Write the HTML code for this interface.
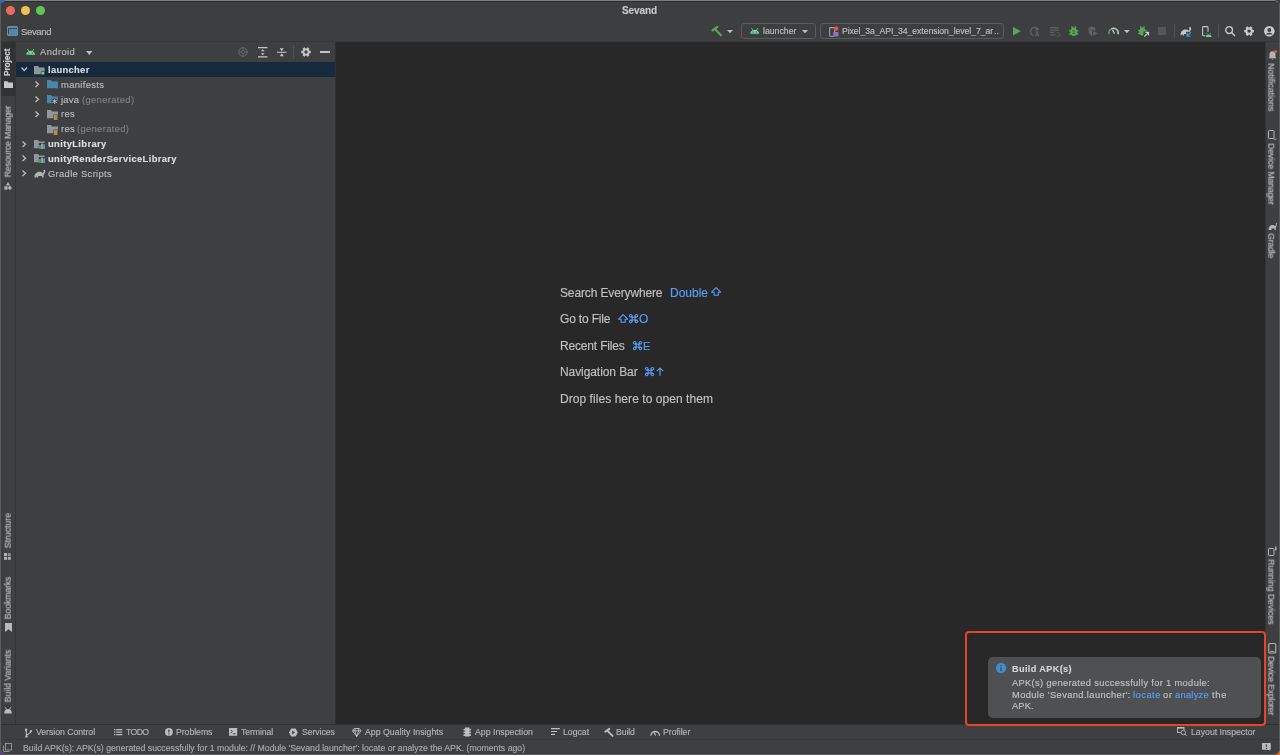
<!DOCTYPE html>
<html><head><meta charset="utf-8"><style>
html,body{margin:0;padding:0;width:1280px;height:755px;overflow:hidden;background:#3a3c3e;}
body{font-family:"Liberation Sans", sans-serif;position:relative;}
div{will-change:transform;-webkit-text-stroke:0.15px currentColor;}
</style></head><body>
<div style="position:absolute;left:0px;top:0px;width:8px;height:8px;background:#2f62d8;"></div><div style="position:absolute;left:0px;top:747px;width:8px;height:8px;background:#5a3a8a;"></div><div style="position:absolute;left:1272px;top:747px;width:8px;height:8px;background:#d8702a;"></div><div style="position:absolute;left:0px;top:0px;width:1280px;height:755px;background:#3e3f41;border-radius:6px 6px 6px 6px;box-sizing:border-box;border:1px solid #5a5c5e;border-top-color:#7d7e80;"></div><div style="position:absolute;left:1px;top:1px;width:1278px;height:40px;background:#3d3e40;border-radius:5px 5px 0 0;"></div><div style="position:absolute;left:5px;top:1px;width:1270px;height:0.7px;background:#2c2d2f;"></div><div style="position:absolute;left:1px;top:41px;width:1278px;height:1px;background:#363739;"></div><div style="position:absolute;left:5.9px;top:5.9px;width:9.2px;height:9.2px;background:#ee6a5e;border-radius:50%;"></div><div style="position:absolute;left:20.9px;top:5.9px;width:9.2px;height:9.2px;background:#f5bf4f;border-radius:50%;"></div><div style="position:absolute;left:35.9px;top:5.9px;width:9.2px;height:9.2px;background:#61c554;border-radius:50%;"></div><div style="position:absolute;left:7px;top:26px;width:11px;height:9.8px;background:#80858a;border-radius:1.5px;"></div><div style="position:absolute;left:8.2px;top:28.3px;width:8.6px;height:6.3px;background:#3a4450;"></div><div style="position:absolute;left:8.7px;top:28.7px;width:7.7px;height:5.6px;background:#4a88b5;"></div><div style="position:absolute;left:1px;top:42px;width:1278px;height:682px;background:#3e3f41;"></div><div style="position:absolute;left:15px;top:42px;width:1px;height:682px;background:#333537;"></div><div style="position:absolute;left:1px;top:42px;width:14px;height:54px;background:#2f3133;"></div><div style="position:absolute;left:16px;top:42px;width:319px;height:682px;background:#3e3f41;"></div><div style="position:absolute;left:335px;top:42px;width:1px;height:682px;background:#2f3032;"></div><div style="position:absolute;left:336px;top:42px;width:929px;height:682px;background:#282828;"></div><div style="position:absolute;left:1265px;top:42px;width:1px;height:682px;background:#333537;"></div><div style="position:absolute;left:1px;top:724px;width:1278px;height:1px;background:#2e3031;"></div><div style="position:absolute;left:1px;top:739px;width:1278px;height:1px;background:#37393b;"></div><svg style="position:absolute;left:3.5px;top:80.9px;overflow:visible" width="9" height="7" viewBox="0 0 9 7"><path d="M0 0.3h3.5l1 1.2H9V7H0z" fill="#c8c8c8"/></svg><svg style="position:absolute;left:4px;top:181.8px;overflow:visible" width="8" height="8" viewBox="0 0 8 8"><path d="M4 0L6.2 3.4H1.8z" fill="#b0b0b0"/><rect x="0.3" y="4.3" width="3.3" height="3.3" fill="#b0b0b0"/><circle cx="5.9" cy="5.9" r="1.8" fill="#b0b0b0"/></svg><svg style="position:absolute;left:4.4px;top:552.7px;overflow:visible" width="7" height="7" viewBox="0 0 7 7"><rect x="0" y="0" width="3" height="3" fill="#b0b0b0"/><rect x="3.8" y="3.8" width="3" height="3" fill="#b0b0b0"/><rect x="3.8" y="0" width="3" height="3" fill="#8a8a8a"/><rect x="0" y="3.8" width="3" height="3" fill="#b0b0b0"/></svg><svg style="position:absolute;left:4.5px;top:622.8px;overflow:visible" width="7" height="9" viewBox="0 0 7 9"><path d="M0 0h7v9L3.5 6.3 0 9z" fill="#b8b8b8"/></svg><svg style="position:absolute;left:3.8px;top:706.6px;overflow:visible" width="8" height="6.5" viewBox="0 0 8 6.5"><path d="M0.2 6.5C0.2 3.4 1.8 2 4 2s3.8 1.4 3.8 4.5z" fill="#bcbcbc"/><path d="M1.3 0.4l1.1 1.9M6.7 0.4L5.6 2.3" stroke="#bcbcbc" stroke-width="1"/></svg><svg style="position:absolute;left:1268px;top:49.5px;overflow:visible" width="9" height="10" viewBox="0 0 9 10"><path d="M4.5 1.2c-2 0-3 1.5-3 3.3v2.6L0.5 8.3h8L7.5 7.1V4.5c0-1.8-1-3.3-3-3.3zM3.5 8.8h2l-1 1z" fill="#b4b4b4"/><circle cx="7.5" cy="1.6" r="1.6" fill="#e0553e"/></svg><svg style="position:absolute;left:1267.5px;top:130px;overflow:visible" width="9" height="10" viewBox="0 0 9 10"><rect x="0.5" y="0.5" width="5.5" height="8" rx="0.8" fill="none" stroke="#b4b4b4" stroke-width="1"/><path d="M5 9.5a2.5 2.5 0 0 1 4 0z" fill="#b4b4b4"/></svg><svg style="position:absolute;left:1267.5px;top:221.4px;overflow:visible" width="9" height="9" viewBox="0 0 9 9"><path d="M0.5 9c0-3 1.5-5 4-5 1.2 0 2 .5 2.5 1.2L8.5 3.5 7.6 2.8 8.8 1.5 9 4 7.8 6.5V9H6.5V7.5h-3V9z" fill="#b4b4b4"/></svg><svg style="position:absolute;left:1267.5px;top:546.3px;overflow:visible" width="9" height="10" viewBox="0 0 9 10"><rect x="0.5" y="2.5" width="5.5" height="7" rx="0.6" fill="none" stroke="#b4b4b4" stroke-width="1"/><rect x="7" y="0.5" width="1.5" height="4" fill="#b4b4b4"/></svg><svg style="position:absolute;left:1267.5px;top:643.3px;overflow:visible" width="9" height="10" viewBox="0 0 9 10"><rect x="0.8" y="0.5" width="7" height="9.5" rx="1" fill="none" stroke="#b4b4b4" stroke-width="1.1"/><rect x="2.3" y="7.8" width="4" height="1" fill="#b4b4b4"/></svg><svg style="position:absolute;left:25.9px;top:48.9px" width="9.3" height="5.77" viewBox="0 0 10 6.2"><path d="M0.2 6.2a4.8 4.3 0 0 1 9.6 0z" fill="#6cd88a"/><path d="M1.6 0.2l1.3 1.8M8.4 0.2L7.1 2" stroke="#6cd88a" stroke-width="0.9" stroke-linecap="round"/><circle cx="3.1" cy="4.3" r="0.55" fill="#3c3e41"/><circle cx="6.9" cy="4.3" r="0.55" fill="#3c3e41"/></svg><svg style="position:absolute;left:85.7px;top:51px;overflow:visible" width="6.5" height="4" viewBox="0 0 6.5 4"><path d="M0 0h6.5L3.25 4z" fill="#bdbdbd"/></svg><svg style="position:absolute;left:238px;top:46.7px;overflow:visible" width="10" height="10" viewBox="0 0 10 10"><circle cx="5" cy="5" r="4.3" fill="none" stroke="#6a6c6e" stroke-width="0.9"/><circle cx="5" cy="5" r="1.6" fill="none" stroke="#6a6c6e" stroke-width="0.8"/><path d="M5 0.7v2.2M5 7.1v2.2M0.7 5h2.2M7.1 5h2.2" stroke="#6a6c6e" stroke-width="0.9"/></svg><svg style="position:absolute;left:257.5px;top:46.5px;overflow:visible" width="9.5" height="10.5" viewBox="0 0 9.5 10.5"><path d="M0 0.6h9.5M0 9.9h9.5" stroke="#c4c4c4" stroke-width="1.1"/><path d="M4.75 2.3L6.6 4.3H2.9zM4.75 8.2L6.6 6.2H2.9z" fill="#c4c4c4"/></svg><svg style="position:absolute;left:277px;top:46.5px;overflow:visible" width="9.5" height="10.5" viewBox="0 0 9.5 10.5"><path d="M0 5.25h9.5" stroke="#c4c4c4" stroke-width="1.1"/><path d="M4.75 4.2L6.8 1.2H2.7zM4.75 6.3L6.8 9.3H2.7z" fill="#c4c4c4"/></svg><div style="position:absolute;left:293.3px;top:45px;width:0.9px;height:14px;background:#505254;"></div><svg style="position:absolute;left:300.8px;top:46.8px;overflow:visible" width="10" height="10" viewBox="0 0 10.2 10.2"><path d="M8.53 3.72 L9.95 3.88 L9.95 6.32 L8.53 6.48 L8.01 7.38 L8.58 8.69 L6.46 9.91 L5.62 8.76 L4.58 8.76 L3.74 9.91 L1.62 8.69 L2.19 7.38 L1.67 6.48 L0.25 6.32 L0.25 3.88 L1.67 3.72 L2.19 2.82 L1.62 1.51 L3.74 0.29 L4.58 1.44 L5.62 1.44 L6.46 0.29 L8.58 1.51 L8.01 2.82Z" fill="#c4c4c4"/><circle cx="5.1" cy="5.1" r="1.7" fill="#3c3e41"/></svg><div style="position:absolute;left:320px;top:51.2px;width:10px;height:1.5px;background:#c4c4c4;"></div><div style="position:absolute;left:16px;top:62px;width:319px;height:15px;background:#16293d;"></div><svg style="position:absolute;left:20.9px;top:67.25px;overflow:visible" width="6.5" height="4" viewBox="0 0 6.5 4"><path d="M0.5 0.5L3.25 3.5 6 0.5" fill="none" stroke="#bcbcbc" stroke-width="1.3"/></svg><svg style="position:absolute;left:33.9px;top:65.8px;overflow:visible" width="11" height="9" viewBox="0 0 11 9"><path d="M0 0h4l1.2 1.4H10.6V8.2H0z" fill="#8f969c"/><circle cx="8.8" cy="7.1" r="2.2" fill="#16293d"/><circle cx="8.8" cy="7.1" r="1.7" fill="#5fd77b"/></svg><svg style="position:absolute;left:35px;top:81.35px;overflow:visible" width="4" height="6.5" viewBox="0 0 4 6.5"><path d="M0.5 0.5L3.5 3.25 0.5 6" fill="none" stroke="#bcbcbc" stroke-width="1.3"/></svg><svg style="position:absolute;left:47px;top:80.45px;overflow:visible" width="11" height="8.2" viewBox="0 0 11 8.2"><path d="M0 0h4l1.2 1.4H11V8.2H0z" fill="#4a86ac"/></svg><svg style="position:absolute;left:35px;top:96.14999999999999px;overflow:visible" width="4" height="6.5" viewBox="0 0 4 6.5"><path d="M0.5 0.5L3.5 3.25 0.5 6" fill="none" stroke="#bcbcbc" stroke-width="1.3"/></svg><svg style="position:absolute;left:47px;top:95.25px;overflow:visible" width="11" height="9" viewBox="0 0 11 9"><path d="M0 0h4l1.2 1.4H11V8.2H0z" fill="#4a86ac"/><circle cx="7.6" cy="6.4" r="3.1" fill="#3c3e41"/><path d="M7.6 3.8v5.2M5.35 5.1l4.5 2.6M5.35 7.7l4.5-2.6" stroke="#c0c0c0" stroke-width="0.9"/></svg><svg style="position:absolute;left:35px;top:110.95px;overflow:visible" width="4" height="6.5" viewBox="0 0 4 6.5"><path d="M0.5 0.5L3.5 3.25 0.5 6" fill="none" stroke="#bcbcbc" stroke-width="1.3"/></svg><svg style="position:absolute;left:47px;top:110.05000000000001px;overflow:visible" width="11" height="10" viewBox="0 0 11 10"><path d="M0 0h4l1.2 1.4H11V8.2H0z" fill="#8f969c"/><rect x="6.3" y="4.6" width="4.5" height="5.4" fill="#3c3e41"/><rect x="6.8" y="5" width="3.6" height="5" fill="#b68a4a"/></svg><svg style="position:absolute;left:47px;top:124.85px;overflow:visible" width="11" height="10" viewBox="0 0 11 10"><path d="M0 0h4l1.2 1.4H11V8.2H0z" fill="#8f969c"/><rect x="6.3" y="4.6" width="4.5" height="5.4" fill="#3c3e41"/><rect x="6.8" y="5" width="3.6" height="5" fill="#b68a4a"/></svg><svg style="position:absolute;left:21.5px;top:140.55px;overflow:visible" width="4" height="6.5" viewBox="0 0 4 6.5"><path d="M0.5 0.5L3.5 3.25 0.5 6" fill="none" stroke="#bcbcbc" stroke-width="1.3"/></svg><svg style="position:absolute;left:33.9px;top:139.65px;overflow:visible" width="11" height="9" viewBox="0 0 11 9"><path d="M0 0h4l1.2 1.4H10.6V8.2H0z" fill="#8f969c"/><rect x="4.8" y="3" width="6" height="6" fill="#3c3e41"/><rect x="5.2" y="5" width="1.5" height="4" fill="#5ab552"/><rect x="7.3" y="3.6" width="1.5" height="5.4" fill="#b8b8b8"/><rect x="9.3" y="4.3" width="1.5" height="4.7" fill="#40b6e0"/></svg><svg style="position:absolute;left:21.5px;top:155.35000000000002px;overflow:visible" width="4" height="6.5" viewBox="0 0 4 6.5"><path d="M0.5 0.5L3.5 3.25 0.5 6" fill="none" stroke="#bcbcbc" stroke-width="1.3"/></svg><svg style="position:absolute;left:33.9px;top:154.45000000000002px;overflow:visible" width="11" height="9" viewBox="0 0 11 9"><path d="M0 0h4l1.2 1.4H10.6V8.2H0z" fill="#8f969c"/><rect x="4.8" y="3" width="6" height="6" fill="#3c3e41"/><rect x="5.2" y="5" width="1.5" height="4" fill="#5ab552"/><rect x="7.3" y="3.6" width="1.5" height="5.4" fill="#b8b8b8"/><rect x="9.3" y="4.3" width="1.5" height="4.7" fill="#40b6e0"/></svg><svg style="position:absolute;left:21.5px;top:170.15000000000003px;overflow:visible" width="4" height="6.5" viewBox="0 0 4 6.5"><path d="M0.5 0.5L3.5 3.25 0.5 6" fill="none" stroke="#bcbcbc" stroke-width="1.3"/></svg><svg style="position:absolute;left:33.5px;top:168.65000000000003px;overflow:visible" width="11.5" height="8.6" viewBox="0 0 11.5 8.6"><path d="M0.3 8.6C0.3 5 2.5 2.8 5.5 2.8c1.6 0 2.6.6 3.2 1.4l1.3-1.6-.9-.7 1-1.4c.8.3 1.4 1.2 1.3 2.3L9.6 6v2.6H8V7H4.2v1.6H2.6V7.2L1.8 8.6z" fill="#b4b4b4"/></svg><svg style="position:absolute;left:711.4px;top:287.3px;overflow:visible" width="10.3" height="8.8" viewBox="0 0 10.3 8.8"><path d="M5.15 0.6L9.7 5.2H7.2V8.3H3.1V5.2H0.6z" fill="none" stroke="#589df6" stroke-width="1.1" stroke-linejoin="round"/></svg><svg style="position:absolute;left:617.8px;top:314.3px;overflow:visible" width="10.3" height="8.8" viewBox="0 0 10.3 8.8"><path d="M5.15 0.6L9.7 5.2H7.2V8.3H3.1V5.2H0.6z" fill="none" stroke="#589df6" stroke-width="1.1" stroke-linejoin="round"/></svg><svg style="position:absolute;left:629.3px;top:314.1px;overflow:visible" width="9.2" height="9.2" viewBox="0 0 9.2 9.2"><g fill="none" stroke="#589df6" stroke-width="1.05"><path d="M3.2 1.7V7.5M6 1.7V7.5M1.7 3.2H7.5M1.7 6H7.5"/><circle cx="1.75" cy="1.75" r="1.3"/><circle cx="7.45" cy="1.75" r="1.3"/><circle cx="1.75" cy="7.45" r="1.3"/><circle cx="7.45" cy="7.45" r="1.3"/></g></svg><svg style="position:absolute;left:632.6px;top:340.6px;overflow:visible" width="9.2" height="9.2" viewBox="0 0 9.2 9.2"><g fill="none" stroke="#589df6" stroke-width="1.05"><path d="M3.2 1.7V7.5M6 1.7V7.5M1.7 3.2H7.5M1.7 6H7.5"/><circle cx="1.75" cy="1.75" r="1.3"/><circle cx="7.45" cy="1.75" r="1.3"/><circle cx="1.75" cy="7.45" r="1.3"/><circle cx="7.45" cy="7.45" r="1.3"/></g></svg><svg style="position:absolute;left:645.1px;top:367.1px;overflow:visible" width="9.2" height="9.2" viewBox="0 0 9.2 9.2"><g fill="none" stroke="#589df6" stroke-width="1.05"><path d="M3.2 1.7V7.5M6 1.7V7.5M1.7 3.2H7.5M1.7 6H7.5"/><circle cx="1.75" cy="1.75" r="1.3"/><circle cx="7.45" cy="1.75" r="1.3"/><circle cx="1.75" cy="7.45" r="1.3"/><circle cx="7.45" cy="7.45" r="1.3"/></g></svg><svg style="position:absolute;left:655.8px;top:367.2px;overflow:visible" width="8" height="9" viewBox="0 0 8 9"><path d="M4 8.8V1M0.8 4.2L4 1 7.2 4.2" fill="none" stroke="#589df6" stroke-width="1.15"/></svg><svg style="position:absolute;left:711px;top:25.6px;overflow:visible" width="11.5" height="10.5" viewBox="0 0 11.5 10.5"><path d="M1.6 4.4L6.2 0.9" stroke="#5aa55a" stroke-width="2.3" stroke-linecap="round"/><path d="M3.9 3.0L10.0 9.3" stroke="#5aa55a" stroke-width="2.2" stroke-linecap="round"/></svg><svg style="position:absolute;left:727px;top:29.8px;overflow:visible" width="6" height="3.3" viewBox="0 0 6 3.3"><path d="M0 0h6L3 3.3z" fill="#bdbdbd"/></svg><div style="position:absolute;left:741.2px;top:22.8px;width:74.5px;height:16.4px;background:transparent;box-sizing:border-box;border:1px solid #595b5d;border-radius:3px;"></div><svg style="position:absolute;left:749.5px;top:28px" width="9.4" height="5.83" viewBox="0 0 10 6.2"><path d="M0.2 6.2a4.8 4.3 0 0 1 9.6 0z" fill="#6cd88a"/><path d="M1.6 0.2l1.3 1.8M8.4 0.2L7.1 2" stroke="#6cd88a" stroke-width="0.9" stroke-linecap="round"/><circle cx="3.1" cy="4.3" r="0.55" fill="#3c3e41"/><circle cx="6.9" cy="4.3" r="0.55" fill="#3c3e41"/></svg><svg style="position:absolute;left:802px;top:30px;overflow:visible" width="6" height="3.3" viewBox="0 0 6 3.3"><path d="M0 0h6L3 3.3z" fill="#bdbdbd"/></svg><div style="position:absolute;left:820.3px;top:23px;width:183.7px;height:15.6px;background:transparent;box-sizing:border-box;border:1px solid #595b5d;border-radius:3px;"></div><svg style="position:absolute;left:829.3px;top:25.6px;overflow:visible" width="10" height="11" viewBox="0 0 10 11"><rect x="0.6" y="1.6" width="5" height="8.6" rx="0.8" fill="none" stroke="#9aa4ae" stroke-width="1.1"/><rect x="4.2" y="6" width="5.3" height="4.6" rx="0.6" fill="#8a73c0"/><circle cx="7.2" cy="2.6" r="2.3" fill="#e0553e"/></svg><svg style="position:absolute;left:1012.9px;top:26.9px;overflow:visible" width="7.8" height="8.4" viewBox="0 0 7.8 8.4"><path d="M0 0L7.8 4.2 0 8.4z" fill="#5aa55a"/></svg><svg style="position:absolute;left:1030.3px;top:26px;overflow:visible" width="10" height="10.5" viewBox="0 0 10 10.5"><path d="M8.2 3.6A4.1 4.1 0 1 0 3.6 9.6" fill="none" stroke="#5e6062" stroke-width="1.4"/><path d="M5.6 0.6L9.4 3.2 5.6 5.6z" fill="#5e6062"/><path d="M5.3 10.4L7.1 5.8 8.9 10.4M5.9 8.9h2.4" fill="none" stroke="#5e6062" stroke-width="1.1"/></svg><svg style="position:absolute;left:1050.2px;top:26.7px;overflow:visible" width="11" height="9.6" viewBox="0 0 11 9.6"><path d="M0 0.7h8.8M0 3.2h8.8M0 5.4h4M0 7.8h5.6" stroke="#5e6062" stroke-width="1.3"/><path d="M7.2 5.9c1.8-.4 2.9.5 2.9 1.6 0 1.2-1.2 1.8-2.6 1.6" fill="none" stroke="#5e6062" stroke-width="1.0"/></svg><svg style="position:absolute;left:1069.3px;top:25.8px;overflow:visible" width="9.5" height="10.6" viewBox="0 0 9.5 10.6"><g fill="#5aa55a"><path d="M2.3 0.2h1.4v1.4h2.1V0.2h1.4v1.9l-.6.8H2.9l-.6-.8z"/><ellipse cx="4.75" cy="6.1" rx="3.5" ry="4.0"/><rect x="0" y="4.3" width="9.5" height="1.3"/><rect x="0" y="7.3" width="9.5" height="1.3"/></g><path d="M3.6 5h2.3M3.6 7.3h2.3" stroke="#3d3e40" stroke-width="0.9"/></svg><svg style="position:absolute;left:1088px;top:26.2px;overflow:visible" width="11" height="10.5" viewBox="0 0 11 10.8"><path d="M0.3 1.8L3.8 0.2 7.3 1.8V5.3c0 2.4-1.6 3.8-3.5 4.6C1.9 9.1.3 7.7.3 5.3z" fill="#5e6062"/><path d="M4.6 4.4L10.8 7.6 4.6 10.8z" fill="#5e6062" stroke="#3d3e40" stroke-width="0.9"/></svg><svg style="position:absolute;left:1107.8px;top:26.9px;overflow:visible" width="11.1" height="7.5" viewBox="0 0 11.1 7.5"><path d="M1.1 7.2A4.45 4.45 0 0 1 3.2 2.2" fill="none" stroke="#5aa55a" stroke-width="1.5"/><path d="M3.2 2.2A4.45 4.45 0 0 1 10 7.2" fill="none" stroke="#c4c4c4" stroke-width="1.5"/><path d="M4.5 2.8L6.6 6.8" stroke="#c4c4c4" stroke-width="1.4"/></svg><svg style="position:absolute;left:1123.7px;top:29.8px;overflow:visible" width="5.8" height="3.3" viewBox="0 0 5.8 3.3"><path d="M0 0h5.8L2.9 3.3z" fill="#bdbdbd"/></svg><svg style="position:absolute;left:1138.2px;top:25.9px;overflow:visible" width="11.1" height="11.1" viewBox="0 0 11.1 11.1"><g fill="#5aa55a"><path d="M2.1 0.2h1.3v1.3h2V0.2h1.3v1.8l-.6.8H2.7l-.6-.8z"/><ellipse cx="4.4" cy="5.8" rx="3.3" ry="3.8"/><rect x="0" y="4.1" width="8.8" height="1.2"/><rect x="0" y="6.9" width="8.8" height="1.2"/></g><rect x="5.4" y="5.4" width="5.7" height="5.7" fill="#3d3e40"/><path d="M6.4 10.5L10.2 6.7M7.3 6.4h3.2v3.2" fill="none" stroke="#c8c8c8" stroke-width="1.2"/></svg><div style="position:absolute;left:1158.1px;top:27.3px;width:8px;height:7.7px;background:#545658;"></div><div style="position:absolute;left:1174.3px;top:24px;width:0.9px;height:14px;background:#505254;"></div><svg style="position:absolute;left:1180.4px;top:26.3px;overflow:visible" width="12.4" height="10.5" viewBox="0 0 12.4 10.5"><path d="M0.5 9.5C0.5 6 2.4 3.6 5.4 3.6c1.5 0 2.4.5 3 1.2l1.4-1.8-.9-.7 1-1.6c.9.3 1.6 1.4 1.3 2.6L9.4 6.6V9.5H7.9V8H4.1V9.5H2.6V8z" fill="#c4c4c4"/><rect x="6" y="5.8" width="6.4" height="4.7" fill="#3c3e41"/><path d="M6.8 10L11 6.2M7 6.8v3.4h3.4" fill="none" stroke="#3d95e0" stroke-width="1.2"/></svg><svg style="position:absolute;left:1201.7px;top:25.8px;overflow:visible" width="9.6" height="11" viewBox="0 0 9.6 11"><rect x="0.6" y="0.6" width="5.4" height="9.2" rx="0.9" fill="none" stroke="#c4c4c4" stroke-width="1.1"/><rect x="3.4" y="5.8" width="6.2" height="5.2" fill="#3d3e40"/><path d="M3.8 11a2.9 2.6 0 0 1 5.8 0z" fill="#6cd88a"/><path d="M4.6 6.9l.8 1.2M8.8 6.9L8 8.1" stroke="#6cd88a" stroke-width="0.7"/></svg><div style="position:absolute;left:1218px;top:24px;width:0.9px;height:14px;background:#505254;"></div><svg style="position:absolute;left:1225px;top:26px;overflow:visible" width="10.5" height="10.5" viewBox="0 0 10.5 10.5"><circle cx="4.1" cy="4.1" r="3.4" fill="none" stroke="#c8c8c8" stroke-width="1.3"/><path d="M6.6 6.6L10 10" stroke="#c8c8c8" stroke-width="1.4"/></svg><svg style="position:absolute;left:1244.3px;top:26.2px;overflow:visible" width="10.2" height="10.2" viewBox="0 0 10.2 10.2"><path d="M8.53 3.72 L9.95 3.88 L9.95 6.32 L8.53 6.48 L8.01 7.38 L8.58 8.69 L6.46 9.91 L5.62 8.76 L4.58 8.76 L3.74 9.91 L1.62 8.69 L2.19 7.38 L1.67 6.48 L0.25 6.32 L0.25 3.88 L1.67 3.72 L2.19 2.82 L1.62 1.51 L3.74 0.29 L4.58 1.44 L5.62 1.44 L6.46 0.29 L8.58 1.51 L8.01 2.82Z" fill="#c8c8c8"/><circle cx="5.1" cy="5.1" r="1.7" fill="#3d3e40"/></svg><svg style="position:absolute;left:1263.6px;top:26px;overflow:visible" width="10.6" height="10.6" viewBox="0 0 10.6 10.6"><circle cx="5.3" cy="5.3" r="5.3" fill="#c8c8c8"/><circle cx="5.3" cy="4" r="1.9" fill="#3c3e41"/><path d="M1.9 8.6a3.6 2.8 0 0 1 6.8 0" fill="#3c3e41"/></svg><svg style="position:absolute;left:24.7px;top:727.5px;overflow:visible" width="7.5" height="10" viewBox="0 0 7.5 10"><path d="M1.1 1.8L1.5 8.4M6 3.1C6 5.6 3.2 5.8 1.3 7" fill="none" stroke="#bdbdbd" stroke-width="1.1"/><circle cx="1.1" cy="1.8" r="1.2" fill="#bdbdbd"/><circle cx="6" cy="3.1" r="1.2" fill="#bdbdbd"/><circle cx="1.5" cy="8.4" r="1.2" fill="#bdbdbd"/></svg><svg style="position:absolute;left:113.8px;top:728.6px;overflow:visible" width="8.3" height="6.6" viewBox="0 0 8.3 6.6"><path d="M0 0.7h1.3M0 3.2h1.3M0 5.7h1.3M2.2 0.7h6.1M2.2 3.2h6.1M2.2 5.7h6.1" stroke="#bdbdbd" stroke-width="1.35"/></svg><svg style="position:absolute;left:164.6px;top:728.2px;overflow:visible" width="7.8" height="7.8" viewBox="0 0 7.8 7.8"><circle cx="3.9" cy="3.9" r="3.9" fill="#bdbdbd"/><path d="M3.9 1.5v2.9" stroke="#3c3e41" stroke-width="1.2"/><circle cx="3.9" cy="5.9" r="0.65" fill="#3c3e41"/></svg><svg style="position:absolute;left:228.9px;top:728.2px;overflow:visible" width="8.2" height="7.8" viewBox="0 0 8.2 7.8"><rect x="0" y="0" width="8.2" height="7.8" rx="0.6" fill="#bdbdbd"/><path d="M1.6 2l1.8 1.5-1.8 1.5M4 5.8h2.6" fill="none" stroke="#3c3e41" stroke-width="0.9"/></svg><svg style="position:absolute;left:288.9px;top:727.8px;overflow:visible" width="8.8" height="8.8" viewBox="0 0 8.8 8.8"><path d="M2.2 0.4h4.4l2.2 4-2.2 4H2.2L0 4.4z" fill="#bdbdbd"/><path d="M3.2 2.4L6 4.4 3.2 6.4z" fill="#3c3e41"/></svg><svg style="position:absolute;left:352.3px;top:727.6px;overflow:visible" width="9.4" height="9" viewBox="0 0 9.4 9"><path d="M2 0.5h5.4l1.6 2.3L4.7 8.5 0.4 2.8z M0.4 2.8h8.6M3.3 0.5l-.5 2.3 1.9 5.7 1.9-5.7-.5-2.3" fill="none" stroke="#bdbdbd" stroke-width="0.9"/></svg><svg style="position:absolute;left:462.7px;top:727.4px;overflow:visible" width="8.4" height="9.6" viewBox="0 0 8.4 9.6"><path d="M2 0.5h4.4v1.3h1.5v1.7H6.4v1h1.5v1.7H6.4v1h1.5V9H6.4v.6H2V9H.5V7.2H2v-1H.5V4.5H2v-1H.5V1.8H2z" fill="#bdbdbd"/></svg><svg style="position:absolute;left:550.6px;top:728.4px;overflow:visible" width="8.8" height="7" viewBox="0 0 8.8 7"><path d="M0 0.6h8.8M0 3.5h6M0 6.4h4" stroke="#bdbdbd" stroke-width="1.2"/></svg><svg style="position:absolute;left:603.8px;top:728.2px;overflow:visible" width="9.7" height="9.6" viewBox="0 0 9.7 9.6"><path d="M1.3 3.7L5.2 0.9" stroke="#bdbdbd" stroke-width="2" stroke-linecap="round"/><path d="M3.3 2.6L8.6 7.9" stroke="#bdbdbd" stroke-width="1.9" stroke-linecap="round"/></svg><svg style="position:absolute;left:649.6px;top:729px;overflow:visible" width="10.4" height="7" viewBox="0 0 10.4 7"><path d="M0.9 6.8A4.3 4.3 0 0 1 9.5 6.8" fill="none" stroke="#bdbdbd" stroke-width="1.3"/><path d="M4 3.2L5.6 6.4" stroke="#bdbdbd" stroke-width="1.2"/></svg><svg style="position:absolute;left:1177.3px;top:727.2px;overflow:visible" width="10" height="9" viewBox="0 0 10 9"><rect x="0.5" y="0.5" width="6.5" height="5" fill="none" stroke="#bdbdbd" stroke-width="0.9"/><rect x="0" y="0" width="7" height="1.6" fill="#bdbdbd"/><circle cx="6.3" cy="5.5" r="2.2" fill="#3c3e41" stroke="#bdbdbd" stroke-width="0.9"/><path d="M7.8 7L9.6 8.8" stroke="#bdbdbd" stroke-width="1"/></svg><svg style="position:absolute;left:3px;top:743px;overflow:visible" width="9" height="9" viewBox="0 0 9 9"><rect x="2.5" y="0.5" width="6" height="6.5" fill="none" stroke="#9a9a9a" stroke-width="0.9"/><path d="M0.5 2.5V8.5H6.5" fill="none" stroke="#9a9a9a" stroke-width="0.9"/></svg><svg style="position:absolute;left:1262.2px;top:743px;overflow:visible" width="8.8" height="7.6" viewBox="0 0 8.8 7.6"><path d="M0 0.6Q0 0 .6 0H8.2Q8.8 0 8.8 .6V6.2Q8.8 6.8 8.2 6.8H7.2L8.2 7.6 5.5 6.8H.6Q0 6.8 0 6.2z" fill="#b8b8b8"/><path d="M4.4 1.3v3" stroke="#3c3e41" stroke-width="1"/><circle cx="4.4" cy="5.4" r="0.55" fill="#3c3e41"/></svg><div style="position:absolute;left:964.9px;top:631.1px;width:301px;height:94.5px;background:transparent;box-sizing:border-box;border:2.3px solid #e8442c;border-radius:4px;"></div><div style="position:absolute;left:987.6px;top:657px;width:272.5px;height:61.2px;background:#4e5052;border-radius:5px;"></div><svg style="position:absolute;left:995.6px;top:663px;overflow:visible" width="10.2" height="10.2" viewBox="0 0 10.2 10.2"><circle cx="5.1" cy="5.1" r="5.1" fill="#3d8fd1"/><rect x="4.35" y="4.3" width="1.5" height="3.8" fill="#4e5052"/><circle cx="5.1" cy="2.6" r="0.85" fill="#4e5052"/></svg>
<div style="position:absolute;left:622.20px;top:6.04px;font-size:10px;line-height:10px;font-weight:700;color:#c6c6c6;letter-spacing:-0.080px;white-space:pre;">Sevand</div><div style="position:absolute;left:20.90px;top:27.17px;font-size:9.6px;line-height:9.6px;font-weight:400;color:#bbbbbb;letter-spacing:-0.391px;white-space:pre;">Sevand</div><div style="position:absolute;left:10.20px;top:69.07px;font-size:8.3px;line-height:8.3px;font-weight:700;color:#d0d0d0;letter-spacing:-0.120px;white-space:pre;transform-origin:0 7.03px;transform:rotate(-90deg);">Project</div><div style="position:absolute;left:10.70px;top:169.72px;font-size:8.6px;line-height:8.6px;font-weight:400;color:#c2c2c2;letter-spacing:-0.093px;white-space:pre;transform-origin:0 7.28px;transform:rotate(-90deg);">Resource Manager</div><div style="position:absolute;left:10.70px;top:540.62px;font-size:8.6px;line-height:8.6px;font-weight:400;color:#c2c2c2;letter-spacing:0.047px;white-space:pre;transform-origin:0 7.28px;transform:rotate(-90deg);">Structure</div><div style="position:absolute;left:10.70px;top:611.82px;font-size:8.6px;line-height:8.6px;font-weight:400;color:#c2c2c2;letter-spacing:-0.043px;white-space:pre;transform-origin:0 7.28px;transform:rotate(-90deg);">Bookmarks</div><div style="position:absolute;left:10.70px;top:694.72px;font-size:8.6px;line-height:8.6px;font-weight:400;color:#c2c2c2;letter-spacing:0.008px;white-space:pre;transform-origin:0 7.28px;transform:rotate(-90deg);">Build Variants</div><div style="position:absolute;left:1268.30px;top:55.72px;font-size:8.6px;line-height:8.6px;font-weight:400;color:#c2c2c2;letter-spacing:0.107px;white-space:pre;transform-origin:0 7.28px;transform:rotate(90deg);">Notifications</div><div style="position:absolute;left:1268.30px;top:135.62px;font-size:8.6px;line-height:8.6px;font-weight:400;color:#c2c2c2;letter-spacing:-0.070px;white-space:pre;transform-origin:0 7.28px;transform:rotate(90deg);">Device Manager</div><div style="position:absolute;left:1268.30px;top:226.02px;font-size:8.6px;line-height:8.6px;font-weight:400;color:#c2c2c2;letter-spacing:-0.149px;white-space:pre;transform-origin:0 7.28px;transform:rotate(90deg);">Gradle</div><div style="position:absolute;left:1268.30px;top:551.72px;font-size:8.6px;line-height:8.6px;font-weight:400;color:#c2c2c2;letter-spacing:0.029px;white-space:pre;transform-origin:0 7.28px;transform:rotate(90deg);">Running Devices</div><div style="position:absolute;left:1268.30px;top:648.72px;font-size:8.6px;line-height:8.6px;font-weight:400;color:#c2c2c2;letter-spacing:-0.110px;white-space:pre;transform-origin:0 7.28px;transform:rotate(90deg);">Device Explorer</div><div style="position:absolute;left:39.60px;top:47.04px;font-size:9.4px;line-height:9.4px;font-weight:400;color:#bbbbbb;letter-spacing:0.410px;white-space:pre;">Android</div><div style="position:absolute;left:47.80px;top:65.09px;font-size:9.4px;line-height:9.4px;font-weight:700;color:#dcdcdc;letter-spacing:0.315px;white-space:pre;">launcher</div><div style="position:absolute;left:60.90px;top:79.89px;font-size:9.4px;line-height:9.4px;font-weight:400;color:#bbbbbb;letter-spacing:0.353px;white-space:pre;">manifests</div><div style="position:absolute;left:60.60px;top:94.69px;font-size:9.4px;line-height:9.4px;font-weight:400;color:#bbbbbb;letter-spacing:0.274px;white-space:pre;">java</div><div style="position:absolute;left:81.70px;top:94.69px;font-size:9.4px;line-height:9.4px;font-weight:400;color:#7f8182;letter-spacing:0.357px;white-space:pre;">(generated)</div><div style="position:absolute;left:60.80px;top:109.49px;font-size:9.4px;line-height:9.4px;font-weight:400;color:#bbbbbb;letter-spacing:0.356px;white-space:pre;">res</div><div style="position:absolute;left:60.80px;top:124.29px;font-size:9.4px;line-height:9.4px;font-weight:400;color:#bbbbbb;letter-spacing:0.356px;white-space:pre;">res</div><div style="position:absolute;left:77.40px;top:124.29px;font-size:9.4px;line-height:9.4px;font-weight:400;color:#7f8182;letter-spacing:0.339px;white-space:pre;">(generated)</div><div style="position:absolute;left:47.60px;top:139.09px;font-size:9.4px;line-height:9.4px;font-weight:700;color:#dcdcdc;letter-spacing:0.368px;white-space:pre;">unityLibrary</div><div style="position:absolute;left:47.60px;top:153.89px;font-size:9.4px;line-height:9.4px;font-weight:700;color:#dcdcdc;letter-spacing:0.362px;white-space:pre;">unityRenderServiceLibrary</div><div style="position:absolute;left:47.60px;top:168.69px;font-size:9.4px;line-height:9.4px;font-weight:400;color:#bbbbbb;letter-spacing:0.328px;white-space:pre;">Gradle Scripts</div><div style="position:absolute;left:560.00px;top:286.64px;font-size:12px;line-height:12px;font-weight:400;color:#c0c0c0;letter-spacing:-0.136px;white-space:pre;">Search Everywhere</div><div style="position:absolute;left:669.80px;top:286.64px;font-size:12px;line-height:12px;font-weight:400;color:#589df6;letter-spacing:0.000px;white-space:pre;">Double</div><div style="position:absolute;left:560.00px;top:313.24px;font-size:12px;line-height:12px;font-weight:400;color:#c0c0c0;letter-spacing:-0.173px;white-space:pre;">Go to File</div><div style="position:absolute;left:560.00px;top:339.84px;font-size:12px;line-height:12px;font-weight:400;color:#c0c0c0;letter-spacing:-0.175px;white-space:pre;">Recent Files</div><div style="position:absolute;left:560.00px;top:366.44px;font-size:12px;line-height:12px;font-weight:400;color:#c0c0c0;letter-spacing:-0.080px;white-space:pre;">Navigation Bar</div><div style="position:absolute;left:560.00px;top:393.04px;font-size:12px;line-height:12px;font-weight:400;color:#c0c0c0;letter-spacing:0.056px;white-space:pre;">Drop files here to open them</div><div style="position:absolute;left:639.40px;top:313.24px;font-size:12px;line-height:12px;font-weight:400;color:#589df6;letter-spacing:0.000px;white-space:pre;">O</div><div style="position:absolute;left:642.80px;top:340.69px;font-size:11px;line-height:11px;font-weight:400;color:#589df6;letter-spacing:0.000px;white-space:pre;">E</div><div style="position:absolute;left:762.60px;top:27.34px;font-size:8.7px;line-height:8.7px;font-weight:400;color:#bfbfbf;letter-spacing:0.009px;white-space:pre;">launcher</div><div style="position:absolute;left:841.70px;top:27.34px;font-size:8.7px;line-height:8.7px;font-weight:400;color:#bfbfbf;letter-spacing:-0.072px;white-space:pre;">Pixel_3a_API_34_extension_level_7_ar</div><div style="position:absolute;left:993.50px;top:27.34px;font-size:8.7px;line-height:8.7px;font-weight:400;color:#bfbfbf;letter-spacing:0.000px;white-space:pre;">..</div><div style="position:absolute;left:36.40px;top:728.44px;font-size:8.7px;line-height:8.7px;font-weight:400;color:#b4b4b4;letter-spacing:-0.020px;white-space:pre;">Version Control</div><div style="position:absolute;left:125.60px;top:728.44px;font-size:8.7px;line-height:8.7px;font-weight:400;color:#b4b4b4;letter-spacing:-0.613px;white-space:pre;">TODO</div><div style="position:absolute;left:176.30px;top:728.44px;font-size:8.7px;line-height:8.7px;font-weight:400;color:#b4b4b4;letter-spacing:-0.038px;white-space:pre;">Problems</div><div style="position:absolute;left:241.00px;top:728.44px;font-size:8.7px;line-height:8.7px;font-weight:400;color:#b4b4b4;letter-spacing:-0.079px;white-space:pre;">Terminal</div><div style="position:absolute;left:301.60px;top:728.44px;font-size:8.7px;line-height:8.7px;font-weight:400;color:#b4b4b4;letter-spacing:-0.064px;white-space:pre;">Services</div><div style="position:absolute;left:365.00px;top:728.44px;font-size:8.7px;line-height:8.7px;font-weight:400;color:#b4b4b4;letter-spacing:0.047px;white-space:pre;">App Quality Insights</div><div style="position:absolute;left:475.00px;top:728.44px;font-size:8.7px;line-height:8.7px;font-weight:400;color:#b4b4b4;letter-spacing:0.037px;white-space:pre;">App Inspection</div><div style="position:absolute;left:562.90px;top:728.44px;font-size:8.7px;line-height:8.7px;font-weight:400;color:#b4b4b4;letter-spacing:0.001px;white-space:pre;">Logcat</div><div style="position:absolute;left:616.40px;top:728.44px;font-size:8.7px;line-height:8.7px;font-weight:400;color:#b4b4b4;letter-spacing:-0.106px;white-space:pre;">Build</div><div style="position:absolute;left:662.90px;top:728.44px;font-size:8.7px;line-height:8.7px;font-weight:400;color:#b4b4b4;letter-spacing:-0.029px;white-space:pre;">Profiler</div><div style="position:absolute;left:1190.70px;top:728.44px;font-size:8.7px;line-height:8.7px;font-weight:400;color:#b4b4b4;letter-spacing:0.010px;white-space:pre;">Layout Inspector</div><div style="position:absolute;left:23.10px;top:744.04px;font-size:8.7px;line-height:8.7px;font-weight:400;color:#aaaaaa;letter-spacing:0.007px;white-space:pre;">Build APK(s): APK(s) generated successfully for 1 module: // Module &#x27;Sevand.launcher&#x27;: locate or analyze the APK. (moments ago)</div><div style="position:absolute;left:1011.60px;top:664.81px;font-size:9.2px;line-height:9.2px;font-weight:700;color:#d4d4d4;letter-spacing:0.341px;white-space:pre;">Build APK(s)</div><div style="position:absolute;left:1011.60px;top:679.13px;font-size:9.3px;line-height:9.3px;font-weight:400;color:#c0c0c0;letter-spacing:0.338px;white-space:pre;">APK(s) generated successfully for 1 module:</div><div style="position:absolute;left:1011.60px;top:690.83px;font-size:9.3px;line-height:9.3px;font-weight:400;color:#c0c0c0;letter-spacing:0.393px;white-space:pre;">Module &#x27;Sevand.launcher&#x27;:</div><div style="position:absolute;left:1132.60px;top:690.83px;font-size:9.3px;line-height:9.3px;font-weight:400;color:#589df6;letter-spacing:0.515px;white-space:pre;">locate</div><div style="position:absolute;left:1162.60px;top:690.83px;font-size:9.3px;line-height:9.3px;font-weight:400;color:#c0c0c0;letter-spacing:0.809px;white-space:pre;">or</div><div style="position:absolute;left:1174.80px;top:690.83px;font-size:9.3px;line-height:9.3px;font-weight:400;color:#589df6;letter-spacing:0.279px;white-space:pre;">analyze</div><div style="position:absolute;left:1211.50px;top:690.83px;font-size:9.3px;line-height:9.3px;font-weight:400;color:#c0c0c0;letter-spacing:0.688px;white-space:pre;">the</div><div style="position:absolute;left:1011.60px;top:702.43px;font-size:9.3px;line-height:9.3px;font-weight:400;color:#c0c0c0;letter-spacing:0.153px;white-space:pre;">APK.</div>
</body></html>
